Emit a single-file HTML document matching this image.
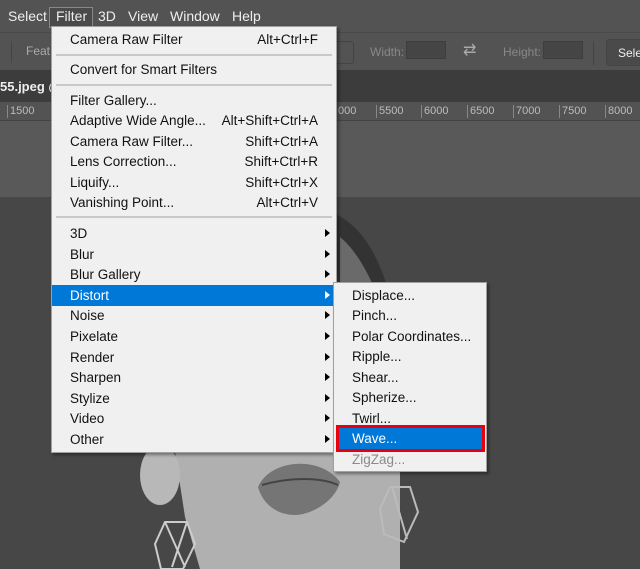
<!DOCTYPE html>
<html><head><meta charset="utf-8"><style>
*{margin:0;padding:0;box-sizing:border-box}
html,body{width:640px;height:569px;overflow:hidden}
body{background:#474747;font-family:"Liberation Sans",sans-serif;position:relative}
.abs{position:absolute}
.mb{left:0;top:0;width:640px;height:32px;background:#535353;color:#eee;font-size:14px}
.mb span{position:absolute;top:8px}
.opt{left:0;top:32px;width:640px;height:38px;background:#535353;border-top:1px solid #4a4a4a;color:#888;font-size:12px}
.tab{left:0;top:70px;width:640px;height:32px;background:#3c3c3c}
.ruler{left:0;top:102px;width:640px;height:19px;background:#535353;color:#bbb;font-size:11px;border-bottom:1px solid #444}
.ruler span{position:absolute;top:3px;border-left:1px solid #888;padding-left:2px;line-height:13px}
.gray{left:0;top:121px;width:640px;height:76px;background:#595959}
.menu{background:#f0f0f0;border:1px solid #a0a0a0;box-shadow:2px 2px 3px rgba(0,0,0,.4);font-size:13.5px;color:#111}
.it{position:absolute;left:0;right:0;height:21px;line-height:21px;padding-left:18px}
.it .k{position:absolute;right:18px;top:0}
.it .ar{position:absolute;right:6px;top:6px;width:0;height:0;border-left:5px solid #000;border-top:4.5px solid transparent;border-bottom:4.5px solid transparent}
.sel{background:#0078d7;color:#fff}
.sel .ar{border-left-color:#fff}
.sep{position:absolute;left:4px;right:4px;height:2px;background:#c8c8c8}
</style></head><body>
<div class="abs gray"></div>
<svg class="abs" style="left:0;top:197px" width="640" height="372">
<path d="M330 15 C360 25 380 60 390 100 L340 100 Z" fill="#333"/>
<path d="M340 40 C358 55 370 80 378 100 L340 100Z" fill="#6a6a6a"/>
<path d="M175 255 L400 255 L400 372 L200 372 L185 320 Z" fill="#b0b0b0"/>
<ellipse cx="160" cy="278" rx="20" ry="30" fill="#b8b8b8"/>
<path d="M258 290 C270 262 320 258 340 285 C335 305 310 318 295 318 C275 318 262 305 258 290Z" fill="#757575"/>
<path d="M262 288 C290 280 320 280 338 288" stroke="#444" stroke-width="2" fill="none"/>
<path d="M165 325 l22 0 l8 22 l-12 25 l-22 0 l-6 -25z M165 325 l20 45 M187 325 l-15 45" fill="none" stroke="#ccc" stroke-width="2"/>
<path d="M390 290 l20 0 l8 25 l-14 30 l-20 -8 l-4 -25z M392 290 l15 52" fill="none" stroke="#bbb" stroke-width="2"/>
</svg>
<div class="abs mb">
<span style="left:8px">Select</span>
<div class="abs" style="left:49px;top:7px;width:44px;height:21px;border:1px solid #888;background:#4a4a4a"></div>
<span style="left:56px">Filter</span><span style="left:98px">3D</span><span style="left:128px">View</span><span style="left:170px">Window</span><span style="left:232px">Help</span>
</div>
<div class="abs opt">
<div class="abs" style="left:11px;top:8px;width:1px;height:22px;background:#444"></div>
<span class="abs" style="left:26px;top:11px;color:#aaa">Feat</span>
<div class="abs" style="left:330px;top:8px;width:24px;height:23px;border:1px solid #444;border-radius:3px"></div>
<span class="abs" style="left:370px;top:12px">Width:</span>
<div class="abs" style="left:406px;top:8px;width:40px;height:18px;background:#454545;border:1px solid #3e3e3e"></div>
<span class="abs" style="left:463px;top:7px;font-size:16px;color:#aaa">⇄</span>
<span class="abs" style="left:503px;top:12px">Height:</span>
<div class="abs" style="left:543px;top:8px;width:40px;height:18px;background:#454545;border:1px solid #3e3e3e"></div>
<div class="abs" style="left:593px;top:8px;width:1px;height:24px;background:#444"></div>
<div class="abs" style="left:606px;top:6px;width:40px;height:27px;border:1px solid #444;border-radius:4px;background:#4a4a4a;color:#eee;padding:6px 0 0 11px">Sele</div>
</div>
<div class="abs tab"><span class="abs" style="left:0;top:9px;color:#eee;font-size:13px;font-weight:bold">55.jpeg @</span></div>
<div class="abs ruler">
<span style="left:7px">1500</span><span style="left:335px">000</span><span style="left:376px">5500</span><span style="left:421px">6000</span><span style="left:467px">6500</span><span style="left:513px">7000</span><span style="left:559px">7500</span><span style="left:605px">8000</span>
</div>
<div class="abs menu" style="left:51px;top:26px;width:286px;height:427px">
<div class="it" style="top:2px">Camera Raw Filter<span class="k">Alt+Ctrl+F</span></div>
<div class="sep" style="top:27px"></div>
<div class="it" style="top:32px">Convert for Smart Filters</div>
<div class="sep" style="top:57px"></div>
<div class="it" style="top:63px">Filter Gallery...</div>
<div class="it" style="top:83px">Adaptive Wide Angle...<span class="k">Alt+Shift+Ctrl+A</span></div>
<div class="it" style="top:104px">Camera Raw Filter...<span class="k">Shift+Ctrl+A</span></div>
<div class="it" style="top:124px">Lens Correction...<span class="k">Shift+Ctrl+R</span></div>
<div class="it" style="top:145px">Liquify...<span class="k">Shift+Ctrl+X</span></div>
<div class="it" style="top:165px">Vanishing Point...<span class="k">Alt+Ctrl+V</span></div>
<div class="sep" style="top:189px"></div>
<div class="it" style="top:196px">3D<span class="ar"></span></div>
<div class="it" style="top:217px">Blur<span class="ar"></span></div>
<div class="it" style="top:237px">Blur Gallery<span class="ar"></span></div>
<div class="it sel" style="top:258px">Distort<span class="ar"></span></div>
<div class="it" style="top:278px">Noise<span class="ar"></span></div>
<div class="it" style="top:299px">Pixelate<span class="ar"></span></div>
<div class="it" style="top:320px">Render<span class="ar"></span></div>
<div class="it" style="top:340px">Sharpen<span class="ar"></span></div>
<div class="it" style="top:361px">Stylize<span class="ar"></span></div>
<div class="it" style="top:381px">Video<span class="ar"></span></div>
<div class="it" style="top:402px">Other<span class="ar"></span></div>
</div>
<div class="abs menu" style="left:333px;top:282px;width:154px;height:190px">
<div class="it" style="top:2px">Displace...</div>
<div class="it" style="top:22px">Pinch...</div>
<div class="it" style="top:43px">Polar Coordinates...</div>
<div class="it" style="top:63px">Ripple...</div>
<div class="it" style="top:84px">Shear...</div>
<div class="it" style="top:104px">Spherize...</div>
<div class="it" style="top:125px">Twirl...</div>
<div class="abs" style="left:2px;top:142px;width:149px;height:27px;border:3px solid #e8000c;background:#0078d7"></div>
<div class="it" style="top:145px;color:#fff">Wave...</div>
<div class="it" style="top:166px;color:#8a8a8a">ZigZag...</div>
</div>
</body></html>
